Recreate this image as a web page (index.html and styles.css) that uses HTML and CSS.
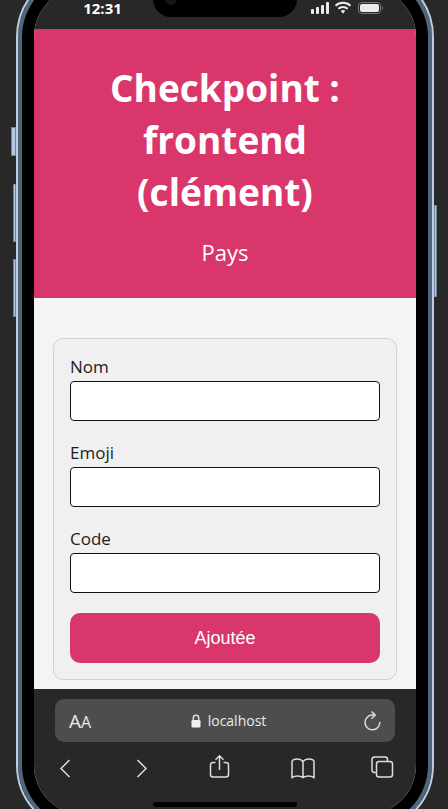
FILE: index.html
```html
<!DOCTYPE html>
<html lang="fr">
<head>
<meta charset="utf-8">
<meta name="viewport" content="width=device-width, initial-scale=1">
<title>Checkpoint : frontend</title>
<link rel="stylesheet" href="styles.css">
</head>
<body>
<div class="phone">
  <span class="key key-mute"></span>
  <span class="key key-up"></span>
  <span class="key key-down"></span>
  <span class="key key-power"></span>
  <div class="screen">
    <div class="status">
      <span class="time">12:31</span>
      <span class="notch"><span class="lens"></span></span>
      <svg class="signals" width="74" height="14" viewBox="0 0 74 14" aria-hidden="true">
        <g fill="#ebebeb">
          <rect x="1" y="8" width="3" height="5" rx="1"/><rect x="6" y="6" width="3" height="7" rx="1"/>
          <rect x="11" y="4" width="3" height="9" rx="1"/><rect x="16" y="1" width="3" height="12" rx="1"/>
          <path d="M30.8 9.7a4 4 0 0 1 4.4 0L33 12.7z"/>
          <rect x="50" y="3" width="19" height="8" rx="2"/>
        </g>
        <g fill="none" stroke="#ebebeb" stroke-width="2">
          <path d="M25.500 4.700a11 11 0 0 1 15 0M28.300 7.800a7 7 0 0 1 9.400 0"/>
        </g>
        <rect x="48.500" y="1.500" width="22" height="11" rx="3" fill="none" stroke="#777"/>
        <path d="M72 5v4q1-.5 1-2t-1-2z" fill="#777"/>
      </svg>
    </div>
    <header class="hero">
      <h1>Checkpoint : frontend (clément)</h1>
      <p>Pays</p>
    </header>
    <main>
      <form class="card">
        <div class="field"><label for="nom">Nom</label><input id="nom" type="text"></div>
        <div class="field"><label for="emoji">Emoji</label><input id="emoji" type="text"></div>
        <div class="field"><label for="code">Code</label><input id="code" type="text"></div>
        <button class="submit" type="button">Ajoutée</button>
      </form>
    </main>
    <footer class="browser">
      <div class="address">
        <button class="text-size" type="button">A<small>A</small></button>
        <span class="host">
          <svg width="10" height="14" viewBox="0 0 10 14" aria-hidden="true"><rect x=".5" y="6" width="9" height="7.500" rx="1.200" fill="#f0f0f0"/><path d="M2.300 6.500V4a2.700 2.700 0 0 1 5.400 0v2.500"/></svg>
          localhost
        </span>
        <button class="reload" type="button" aria-label="Recharger">
          <svg width="18" height="20" viewBox="0 0 18 20"><path d="M11.500 4H9.500A7.400 7.400 0 1 0 16.800 11M8.500 .5l3.800 3.600L8.500 7.700"/></svg>
        </button>
      </div>
      <nav class="tools">
        <button type="button" aria-label="Précédent"><svg width="24" height="26" viewBox="0 0 24 26"><path d="M15.500 5 7 13.500l8.500 8.500"/></svg></button>
        <button type="button" aria-label="Suivant"><svg width="24" height="26" viewBox="0 0 24 26"><path d="M8.500 5 17 13.500 8.500 22"/></svg></button>
        <button type="button" aria-label="Partager"><svg width="24" height="26" viewBox="0 0 24 26"><path d="M8.500 7.500H6Q3.500 7.500 3.500 10v9.500Q3.500 22 6 22h13q2.500 0 2.500-2.500V10q0-2.500-2.500-2.500h-2.500M12.500 15V.8M8.500 4.800l4-4 4 4"/></svg></button>
        <button type="button" aria-label="Signets"><svg width="26" height="26" viewBox="0 0 26 26"><path d="M13 6.500Q10.800 4 7.500 4 2 4 2 7v15.500q5.500-3 11 0 5.500-3 11 0V7q0-3-5.500-3Q15.200 4 13 6.500zV22"/></svg></button>
        <button type="button" aria-label="Onglets"><svg width="24" height="26" viewBox="0 0 24 26"><path d="M6.500 17.500h-2Q2 17.500 2 15V4.500Q2 2 4.500 2H15q2.500 0 2.500 2.500v2"/><rect x="6.500" y="6.500" width="16" height="15.500" rx="2.500"/></svg></button>
      </nav>
      <span class="home"></span>
    </footer>
  </div>
</div>
</body>
</html>
```
FILE: styles.css
```css
* {
  box-sizing: border-box;
}

body {
  margin: 0;
  height: 100vh;
  overflow: hidden;
  background: #282828;
  font-family: "Open Sans", "Noto Sans", sans-serif;
  color: #1c1c1c;
}

button {
  border: 0;
  padding: 0;
  background: none;
  color: inherit;
  font: inherit;
}

svg {
  display: block;
}

/* Device frame, taller than the window at both ends */
.phone {
  position: relative;
  height: calc(100vh + 55px);
  margin: -31px 14px 0 16px;
  padding: 16px;
  border: 2px solid #bfcddf;
  border-radius: 68px;
  background: #000;
  box-shadow: inset 0 0 0 4px #50647c;
}

.key {
  position: absolute;
  left: -5px;
  width: 3px;
  border: 1px solid #71849d;
  background: #b5c8e3;
}

.key-mute {
  top: 156px;
  left: -7px;
  width: 5px;
  height: 29px;
}

.key-up {
  top: 213px;
  height: 58px;
}

.key-down {
  top: 288px;
  height: 58px;
}

.key-power {
  top: 234px;
  left: auto;
  right: -5px;
  height: 92px;
}

.screen {
  display: flex;
  flex-direction: column;
  height: 100%;
  overflow: hidden;
  border-radius: 50px;
  background: #f4f4f4;
}

.status {
  display: grid;
  grid-template-columns: 1fr 144px 1fr;
  flex: none;
  height: 42px;
  background: #282828;
  color: #fff;
}

.time {
  padding: 13px 0 0 18px;
  text-align: center;
  font-size: 15px;
  font-weight: 700;
  line-height: 16px;
}

.notch {
  height: 30px;
  border-radius: 0 0 18px 18px;
  background: #000;
}

.lens {
  display: block;
  width: 12px;
  height: 12px;
  margin: 6px 0 0 12px;
  border-radius: 50%;
  background: #14141c;
}

.signals {
  margin: 14px 0 0 13px;
}

.hero {
  flex: none;
  padding: 33px 24px 30px;
  background: #d9376b;
  color: #fff;
  text-align: center;
}

.hero h1 {
  margin: 0;
  font-size: 37px;
  line-height: 52px;
}

.hero p {
  margin: 18px 0 0;
  font-size: 22px;
  line-height: 32px;
}

main {
  flex: 1;
  min-height: 0;
  padding: 40px 19px 0;
}

.card {
  display: flex;
  flex-direction: column;
  gap: 20px;
  padding: 16px;
  border: 1px solid #d0d0d0;
  border-radius: 10px;
  background: #f0f0f0;
}

.field {
  display: flex;
  flex-direction: column;
  gap: 2px;
}

.field label {
  font-size: 17px;
  line-height: 24px;
}

.field input {
  width: 100%;
  height: 40px;
  padding: 0 10px;
  border: 1px solid #111;
  border-radius: 4px;
  background: #fff;
  font-size: 17px;
}

.submit {
  height: 50px;
  border-radius: 10px;
  background: #d9376b;
  color: #fff;
  font-family: "Liberation Sans", Arial, sans-serif;
  font-size: 18px;
}

.browser {
  display: flex;
  flex-direction: column;
  flex: none;
  height: 126px;
  padding: 10px 21px 0;
  background: #282828;
  color: #ebebeb;
}

.address {
  display: grid;
  grid-template-columns: 1fr auto 1fr;
  align-items: center;
  height: 43px;
  padding: 0 14px;
  border-radius: 9px;
  background: #4d4d4d;
}

.text-size {
  justify-self: start;
  font-size: 19px;
}

.text-size small {
  font-size: 16px;
}

.host {
  display: flex;
  align-items: center;
  gap: 7px;
  padding-left: 7px;
  font-size: 14px;
}

.reload {
  justify-self: end;
}

.browser path,
.tools rect {
  stroke: #ddd;
  stroke-width: 1.5;
  fill: none;
}

.tools {
  display: grid;
  grid-template-columns: 75fr 78fr 82fr 80fr 24px;
  justify-items: start;
  margin: 13px 1px 0 -1px;
}

.home {
  align-self: center;
  width: 144px;
  height: 5px;
  margin-top: 21px;
  border-radius: 3px;
  background: #000;
}
```
